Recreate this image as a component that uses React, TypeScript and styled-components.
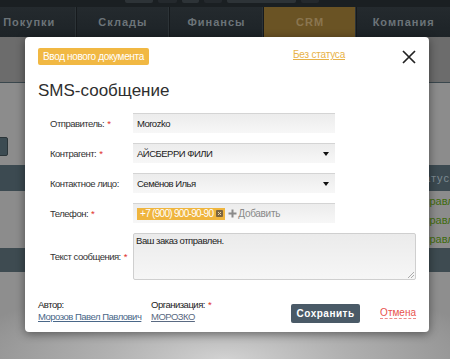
import React from 'react';
import styled, { createGlobalStyle, css } from 'styled-components';

const Global = createGlobalStyle`
  html, body { margin: 0; padding: 0; }
  body {
    width: 450px; height: 359px; overflow: hidden;
    font-family: "Liberation Sans", Arial, sans-serif;
  }
`;

const small = css`
  font-family: "Liberation Sans", Arial, sans-serif;
  font-size: 9.5px;
  letter-spacing: -0.5px;
`;

const Page = styled.div`
  position: relative;
  width: 450px;
  height: 359px;
  overflow: hidden;
  background: #8c8c8c;
  display: flex;
  flex-direction: column;
`;

const TopStrip = styled.div`
  height: 7px;
  background: #1a1f22;
  display: flex;
  align-items: flex-start;
  gap: 5px;
  padding-left: 125px;
`;

const StripBit = styled.div<{ $w: number; $dark?: boolean }>`
  width: ${p => p.$w}px;
  height: 3px;
  background: ${p => (p.$dark ? '#24292d' : '#2d3337')};
  border-radius: 0 0 2px 2px;
`;

const Nav = styled.nav`
  height: 30px;
  display: flex;
  margin-left: -17px;
  width: 467px;
  background: linear-gradient(#242a2e, #1d2327);
`;

const NavItem = styled.div<{ $active?: boolean }>`
  flex: 1;
  display: flex;
  align-items: center;
  justify-content: center;
  font-size: 11px;
  font-weight: bold;
  letter-spacing: 1px;
  color: ${p => (p.$active ? '#8a7650' : '#6c7479')};
  background: ${p => (p.$active ? '#6a5324' : 'transparent')};
  border-right: 1px solid #161a1d;
  box-shadow: inset -2px 0 0 -1px #2c3337;
  &:last-child { border-right: none; box-shadow: none; }
`;

const ToolbarArea = styled.div`
  height: 45px;
  background: #6c6c6c;
  border-bottom: 1px solid #3a474d;
`;

const FilterArea = styled.div`
  height: 82px;
  display: flex;
  align-items: flex-start;
  padding-top: 54px;
  box-sizing: border-box;
  margin-left: -20px;
`;

const DarkButton = styled.div`
  width: 26px;
  height: 17px;
  background: #3c4b52;
  border: 1px solid #2a3438;
  border-radius: 2px;
`;

const TableHead = styled.div`
  height: 26px;
  background: #3c4a51;
  display: flex;
  align-items: center;
  justify-content: flex-end;
  font-size: 11px;
  letter-spacing: 1px;
  color: #7d8b91;
  white-space: nowrap;
`;

const TableBody = styled.div`
  height: 57px;
  display: flex;
  flex-direction: column;
  justify-content: center;
  align-items: flex-end;
  gap: 6px;
  padding-top: 2px;
  box-sizing: border-box;
  overflow: hidden;
`;

const GreenCell = styled.div`
  font-size: 11px;
  color: #3f6b0c;
  line-height: 13px;
  margin-right: -22px;
  white-space: nowrap;
`;

const TableFoot = styled.div`
  height: 24px;
  background: #3e4b51;
`;

const Bottom = styled.div`
  flex: 1;
  background: radial-gradient(ellipse 60% 90% at 50% 100%, #d2d2d2 0%, #b0b0b0 45%, #8e8e8e 100%);
`;

const Modal = styled.div`
  position: absolute;
  left: 25px;
  top: 37px;
  width: 404px;
  box-sizing: border-box;
  background: #fff;
  border-radius: 4px;
  box-shadow: 0 2px 10px rgba(0, 0, 0, 0.45);
  padding: 11px 13px 9px 13px;
  color: #333;
`;

const Header = styled.div`
  display: flex;
  align-items: flex-start;
  height: 17px;
`;

const Badge = styled.div`
  height: 17px;
  line-height: 17px;
  padding: 0 5px;
  background: #f1b843;
  color: #fff;
  font-size: 10px;
  letter-spacing: -0.35px;
  border-radius: 2px;
  white-space: nowrap;
`;

const StatusLink = styled.a`
  margin-left: auto;
  font-size: 10px;
  letter-spacing: -0.2px;
  line-height: 13px;
  color: #e8b248;
  text-decoration: underline;
  text-underline-offset: 1px;
  cursor: pointer;
`;

const CloseBtn = styled.button`
  margin-left: 57px;
  margin-top: 2px;
  width: 14px;
  height: 14px;
  padding: 0;
  border: none;
  background: none;
  display: flex;
`;

const Title = styled.h1`
  margin: 16px 0 0 0;
  font-size: 17px;
  line-height: 20px;
  font-weight: normal;
  color: #2e2e2e;
`;

const Form = styled.div`
  margin: 12px 0 0 12px;
  display: grid;
  grid-template-columns: 83px 283px;
  row-gap: 10px;
  align-items: center;
`;

const Label = styled.label`
  ${small};
  color: #333;
  white-space: nowrap;
`;

const Req = styled.span`
  color: #e0302a;
  margin-left: 3px;
`;

const Field = styled.div`
  width: 202px;
  height: 20px;
  box-sizing: border-box;
  background: linear-gradient(#ececec, #f7f7f7);
  border-top: 1px solid #d4d4d4;
  display: flex;
  align-items: center;
  padding: 0 5px 0 4px;
  ${small};
  color: #222;
  white-space: nowrap;
`;

const Caret = styled.span`
  margin-left: auto;
  margin-right: 1px;
  width: 0;
  height: 0;
  border-left: 3.5px solid transparent;
  border-right: 3.5px solid transparent;
  border-top: 4px solid #111;
`;

const PhoneTag = styled.span`
  display: inline-flex;
  align-items: center;
  height: 12px;
  padding: 0 2px 0 3px;
  gap: 3px;
  background: #efb53e;
  color: #fff;
  font-size: 10px;
  letter-spacing: -0.7px;
`;

const TagX = styled.span`
  width: 7px;
  height: 7px;
  background: #7b6540;
  border-radius: 1px;
  display: flex;
`;

const AddLink = styled.span`
  display: inline-flex;
  align-items: center;
  gap: 1px;
  margin-left: 3px;
  color: #8a8a8a;
  font-size: 10px;
  letter-spacing: -0.3px;
`;

const TextArea = styled.div`
  width: 283px;
  height: 47px;
  box-sizing: border-box;
  border: 1px solid #cfcfcf;
  border-radius: 2px;
  background: linear-gradient(#ebebeb, #f6f6f6);
  padding: 1px 2px;
  font-size: 9.5px;
  letter-spacing: -0.45px;
  color: #222;
  position: relative;
`;

const Grip = styled.svg`
  position: absolute;
  right: 1px;
  bottom: 1px;
`;

const Footer = styled.div`
  margin-top: 19px;
  display: flex;
  align-items: flex-start;
`;

const Meta = styled.div<{ $w?: number }>`
  width: ${p => (p.$w ? `${p.$w}px` : 'auto')};
  display: flex;
  flex-direction: column;
  ${small};
  line-height: 12px;
  color: #222;
  white-space: nowrap;
`;

const MetaLink = styled.a<{ $muted?: boolean }>`
  color: ${p => (p.$muted ? '#5a6a82' : '#4a6788')};
  text-decoration: underline;
  cursor: pointer;
`;

const SaveButton = styled.button`
  margin-left: auto;
  margin-top: 5px;
  width: 69px;
  height: 19px;
  padding: 0;
  border: none;
  border-radius: 2px;
  background: #4a5a67;
  color: #fff;
  font-family: "Liberation Sans", Arial, sans-serif;
  font-weight: bold;
  font-size: 10px;
  letter-spacing: 0.5px;
`;

const Cancel = styled.a`
  margin-left: 20px;
  margin-top: 8px;
  font-size: 10px;
  line-height: 11px;
  color: #e8524c;
  border-bottom: 1px dashed #ee8a86;
  cursor: pointer;
`;

export default function App() {
  return (
    <>
      <Global />
      <Page>
        <TopStrip>
          <StripBit $w={28} />
          <StripBit $w={19} $dark />
          <StripBit $w={17} />
          <StripBit $w={18} $dark />
          <StripBit $w={69} />
          <StripBit $w={18} $dark />
        </TopStrip>
        <Nav>
          <NavItem>Покупки</NavItem>
          <NavItem>Склады</NavItem>
          <NavItem>Финансы</NavItem>
          <NavItem $active>CRM</NavItem>
          <NavItem>Компания</NavItem>
        </Nav>
        <ToolbarArea />
        <FilterArea>
          <DarkButton />
        </FilterArea>
        <TableHead>Статус</TableHead>
        <TableBody>
          <GreenCell>Отправлено</GreenCell>
          <GreenCell>Отправлено</GreenCell>
          <GreenCell>Отправлено</GreenCell>
        </TableBody>
        <TableFoot />
        <Bottom />

        <Modal>
          <Header>
            <Badge>Ввод нового документа</Badge>
            <StatusLink>Без статуса</StatusLink>
            <CloseBtn aria-label="Закрыть">
              <svg width="14" height="14" viewBox="0 0 14 14">
                <path d="M1 1 L13 13 M13 1 L1 13" stroke="#222" strokeWidth="1.7" fill="none" />
              </svg>
            </CloseBtn>
          </Header>
          <Title>SMS-сообщение</Title>
          <Form>
            <Label>Отправитель:<Req>*</Req></Label>
            <Field>Morozko</Field>

            <Label>Контрагент:<Req>*</Req></Label>
            <Field>АЙСБЕРРИ ФИЛИ<Caret /></Field>

            <Label>Контактное лицо:</Label>
            <Field>Семёнов Илья<Caret /></Field>

            <Label>Телефон:<Req>*</Req></Label>
            <Field>
              <PhoneTag>
                +7 (900) 900-90-90
                <TagX>
                  <svg width="7" height="7" viewBox="0 0 7 7">
                    <path d="M2 2 L5 5 M5 2 L2 5" stroke="#e6d3a8" strokeWidth="1" />
                  </svg>
                </TagX>
              </PhoneTag>
              <AddLink>
                <svg width="9" height="9" viewBox="0 0 9 9">
                  <path d="M4.5 0.5 V8.5 M0.5 4.5 H8.5" stroke="#8a8a8a" strokeWidth="2" />
                </svg>
                Добавить
              </AddLink>
            </Field>

            <Label>Текст сообщения:<Req>*</Req></Label>
            <TextArea>
              Ваш заказ отправлен.
              <Grip width="6" height="6" viewBox="0 0 6 6">
                <path d="M6 0 L0 6 M6 3 L3 6" stroke="#999" strokeWidth="0.8" />
              </Grip>
            </TextArea>
          </Form>
          <Footer>
            <Meta $w={113}>
              <span>Автор:</span>
              <MetaLink>Морозов Павел Павлович</MetaLink>
            </Meta>
            <Meta>
              <span>Организация:<Req>*</Req></span>
              <MetaLink $muted>МОРОЗКО</MetaLink>
            </Meta>
            <SaveButton>Сохранить</SaveButton>
            <Cancel>Отмена</Cancel>
          </Footer>
        </Modal>
      </Page>
    </>
  );
}
